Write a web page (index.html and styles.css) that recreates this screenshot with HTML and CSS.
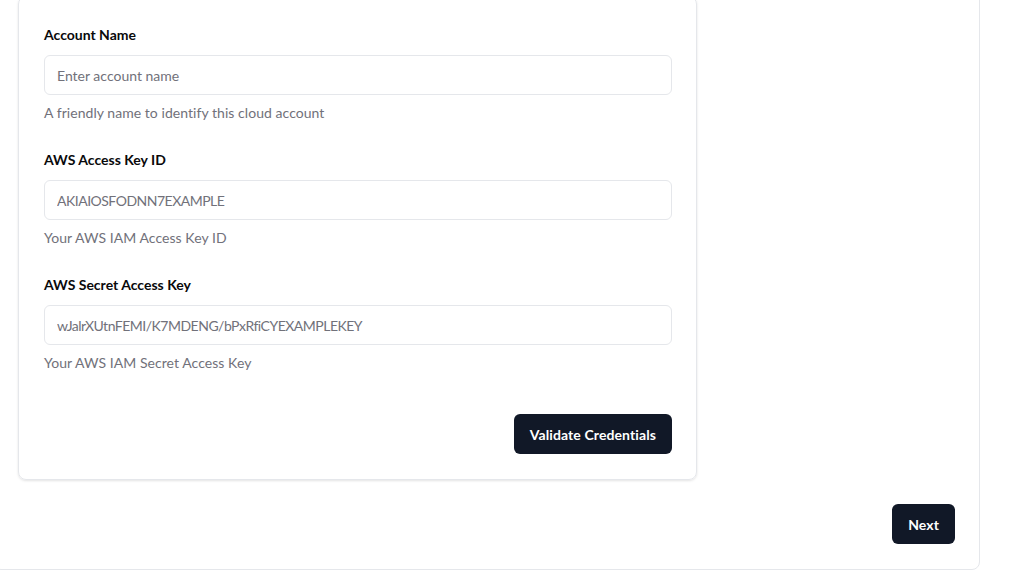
FILE: index.html
```html
<!DOCTYPE html>
<html lang="en">
<head>
<meta charset="utf-8">
<title>Cloud Account</title>
<link rel="stylesheet" href="styles.css">
</head>
<body>
<div class="page">
  <div class="outer-card">
    <div class="form-card">
      <div class="field">
        <label class="label" for="name">Account Name</label>
        <input class="input" id="name" type="text" placeholder="Enter account name">
        <p class="help">A friendly name to identify this cloud account</p>
      </div>
      <div class="field">
        <label class="label" for="akid">AWS Access Key ID</label>
        <input class="input input-key" id="akid" type="text" placeholder="AKIAIOSFODNN7EXAMPLE">
        <p class="help">Your AWS IAM Access Key ID</p>
      </div>
      <div class="field">
        <label class="label" for="secret">AWS Secret Access Key</label>
        <input class="input input-key" id="secret" type="text" placeholder="wJalrXUtnFEMI/K7MDENG/bPxRfiCYEXAMPLEKEY">
        <p class="help">Your AWS IAM Secret Access Key</p>
      </div>
      <div class="actions">
        <button class="btn" type="button">Validate Credentials</button>
      </div>
    </div>
    <div class="footer">
      <button class="btn" type="button">Next</button>
    </div>
  </div>
</div>
</body>
</html>
```
FILE: styles.css
```css
* { box-sizing: border-box; }
html, body { margin: 0; padding: 0; background: #ffffff; overflow: hidden; }
body {
  font-family: Lato, "Liberation Sans", Arial, sans-serif;
  color: #0a0a0a;
  font-size: 14px;
  line-height: 20px;
}
.page {
  margin: -29px 0 0 -7px;
}
.outer-card {
  width: 987px;
  border: 1px solid #e5e7eb;
  border-radius: 8px;
  padding: 24px 24px 25px;
  background: #fff;
}
.form-card {
  width: 679px;
  border: 1px solid #e5e7eb;
  border-radius: 8px;
  box-shadow: 0 1px 3px rgba(0,0,0,0.08), 0 1px 2px rgba(0,0,0,0.04);
  padding: 28px 24px 25px 25px;
  display: flex;
  flex-direction: column;
  gap: 27px;
}
.field {
  display: flex;
  flex-direction: column;
}
.label {
  font-weight: 700;
  font-size: 14px;
  line-height: 20px;
  color: #09090b;
  margin-bottom: 10px;
}
.input {
  height: 40px;
  border: 1px solid #e5e7eb;
  border-radius: 6px;
  padding: 0 12px;
  font-family: inherit;
  font-size: 14px;
  color: #0a0a0a;
  background: #fff;
  outline: none;
}
.input::placeholder { color: #71717a; }
.input-key::placeholder { letter-spacing: -0.5px; }
.help {
  margin: 8px 0 0;
  color: #71717a;
  font-size: 14px;
  line-height: 20px;
  letter-spacing: 0.05px;
}
.actions {
  display: flex;
  justify-content: flex-end;
  margin-top: 14px;
}
.btn {
  height: 40px;
  padding: 0 16px;
  border: none;
  border-radius: 6px;
  background: #111827;
  color: #fff;
  font-family: inherit;
  font-weight: 700;
  font-size: 14px;
  letter-spacing: 0.1px;
}
.footer {
  display: flex;
  justify-content: flex-end;
  margin-top: 24px;
}
```
